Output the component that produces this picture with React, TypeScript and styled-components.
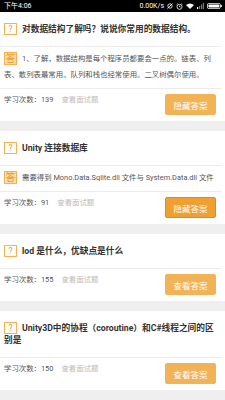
import React from 'react'
import styled, { createGlobalStyle } from 'styled-components'

const GlobalStyle = createGlobalStyle`
  html, body {
    margin: 0;
    padding: 0;
    background: #efefef;
    font-family: Roboto, "Noto Sans CJK SC", sans-serif;
  }
`

const Page = styled.div`
  width: 225px;
  height: 400px;
  overflow: hidden;
  background: #efefef;
`

const StatusBar = styled.div`
  height: 12px;
  background: #000;
  color: #fff;
  display: flex;
  align-items: center;
  justify-content: space-between;
  padding: 0 3px 0 4px;
  font-size: 7px;
  line-height: 12px;
`

const StatusRight = styled.div`
  display: flex;
  align-items: center;
  gap: 3px;
`

const List = styled.div`
  display: flex;
  flex-direction: column;
  gap: 10px;
`

const Card = styled.div`
  background: #fff;
`

const Question = styled.div`
  padding: 11px 4px 11px 4px;
  font-size: 8.7px;
  line-height: 12px;
  font-weight: 700;
  color: #333;
  border-bottom: 1px solid #ececec;
  margin-right: 3px;
`

const Answer = styled.div`
  padding: 4px 2px 5px 4px;
  font-size: 7.4px;
  line-height: 16px;
  color: #555;
  border-bottom: 1px solid #ececec;
  margin-right: 3px;
`

const Mark = styled.span<{ filled?: boolean }>`
  float: left;
  display: flex;
  align-items: center;
  justify-content: center;
  box-sizing: border-box;
  width: 13px;
  height: ${({ filled }) => (filled ? '13px' : '12px')};
  margin: ${({ filled }) => (filled ? '1px 5px 0 0' : '0 5px 0 0')};
  border: 1px solid #f2b257;
  background: ${({ filled }) => (filled ? '#fcdcae' : '#fffdf8')};
  color: #ef9a22;
  font-size: ${({ filled }) => (filled ? '10px' : '8.5px')};
  line-height: 1;
  font-weight: 400;
`

const Footer = styled.div`
  display: flex;
  align-items: flex-start;
  justify-content: space-between;
  padding: 5px 9px 6px 4px;
`

const Stats = styled.div`
  font-size: 7.4px;
  line-height: 12px;
  color: #555;
  display: flex;
  gap: 8px;
`

const Link = styled.span`
  color: #bcbcbc;
`

const Button = styled.div<{ pressed?: boolean }>`
  box-sizing: border-box;
  width: 51px;
  height: 21px;
  border-radius: 2px;
  background: ${({ pressed }) => (pressed ? '#efa031' : '#f2b256')};
  border: 1px solid ${({ pressed }) => (pressed ? '#de8d1c' : '#f2b256')};
  color: #fff;
  font-size: 8.5px;
  display: flex;
  align-items: center;
  justify-content: center;
`

type Item = {
  question: string
  answer?: string
  count: number
  pressed?: boolean
}

const items: Item[] = [
  {
    question: '对数据结构了解吗？说说你常用的数据结构。',
    answer: '1、了解，数据结构是每个程序员都要会一点的。链表、列表、散列表最常用。队列和栈也经常使用。二叉树偶尔使用。',
    count: 139,
  },
  {
    question: 'Unity 连接数据库',
    answer: '需要得到 Mono.Data.Sqlite.dll 文件与 System.Data.dll 文件',
    count: 91,
    pressed: true,
  },
  { question: 'lod 是什么，优缺点是什么', count: 155 },
  { question: 'Unity3D中的协程（coroutine）和C#线程之间的区别是', count: 150 },
]

const StatusIcons = () => (
  <StatusRight>
    <span>0.00K/s</span>
    <svg width="6" height="6" viewBox="0 0 6 6">
      <circle cx="3" cy="3" r="2.2" fill="none" stroke="#fff" strokeWidth="0.8" />
      <line x1="0.5" y1="5.5" x2="5.5" y2="0.5" stroke="#fff" strokeWidth="0.8" />
    </svg>
    <svg width="7" height="7" viewBox="0 0 7 7">
      <circle cx="3.5" cy="3.8" r="2.5" fill="none" stroke="#fff" strokeWidth="0.8" />
      <path d="M3.5 2.5 V3.9 H4.5" fill="none" stroke="#fff" strokeWidth="0.7" />
      <path d="M0.6 1.6 L1.8 0.6 M6.4 1.6 L5.2 0.6" stroke="#fff" strokeWidth="0.7" />
    </svg>
    <svg width="8" height="6" viewBox="0 0 8 6">
      <path d="M0 2 Q4 -1 8 2 L4 6 Z" fill="#fff" />
    </svg>
    <svg width="7" height="6" viewBox="0 0 7 6">
      <rect x="0" y="4" width="1.2" height="2" fill="#fff" />
      <rect x="2" y="3" width="1.2" height="3" fill="#777" />
      <rect x="4" y="1.5" width="1.2" height="4.5" fill="#777" />
      <rect x="5.8" y="0" width="1.2" height="6" fill="#777" />
    </svg>
    <svg width="15" height="6" viewBox="0 0 15 6">
      <rect x="0.4" y="0.4" width="13" height="5.2" rx="1.5" fill="none" stroke="#fff" strokeWidth="0.8" />
      <rect x="1.5" y="1.4" width="10.8" height="3.2" rx="0.8" fill="#fff" />
      <rect x="13.6" y="2" width="1.2" height="2" fill="#fff" />
    </svg>
  </StatusRight>
)

export default function App() {
  return (
    <Page>
      <GlobalStyle />
      <StatusBar>
        <span>下午4:06</span>
        <StatusIcons />
      </StatusBar>
      <List>
        {items.map((item) => (
          <Card key={item.question}>
            <Question>
              <Mark>?</Mark>
              {item.question}
            </Question>
            {item.answer && (
              <Answer>
                <Mark filled>答</Mark>
                {item.answer}
              </Answer>
            )}
            <Footer>
              <Stats>
                <span>学习次数：{item.count}</span>
                <Link>查看面试题</Link>
              </Stats>
              <Button pressed={item.pressed}>{item.answer ? '隐藏答案' : '查看答案'}</Button>
            </Footer>
          </Card>
        ))}
      </List>
    </Page>
  )
}
